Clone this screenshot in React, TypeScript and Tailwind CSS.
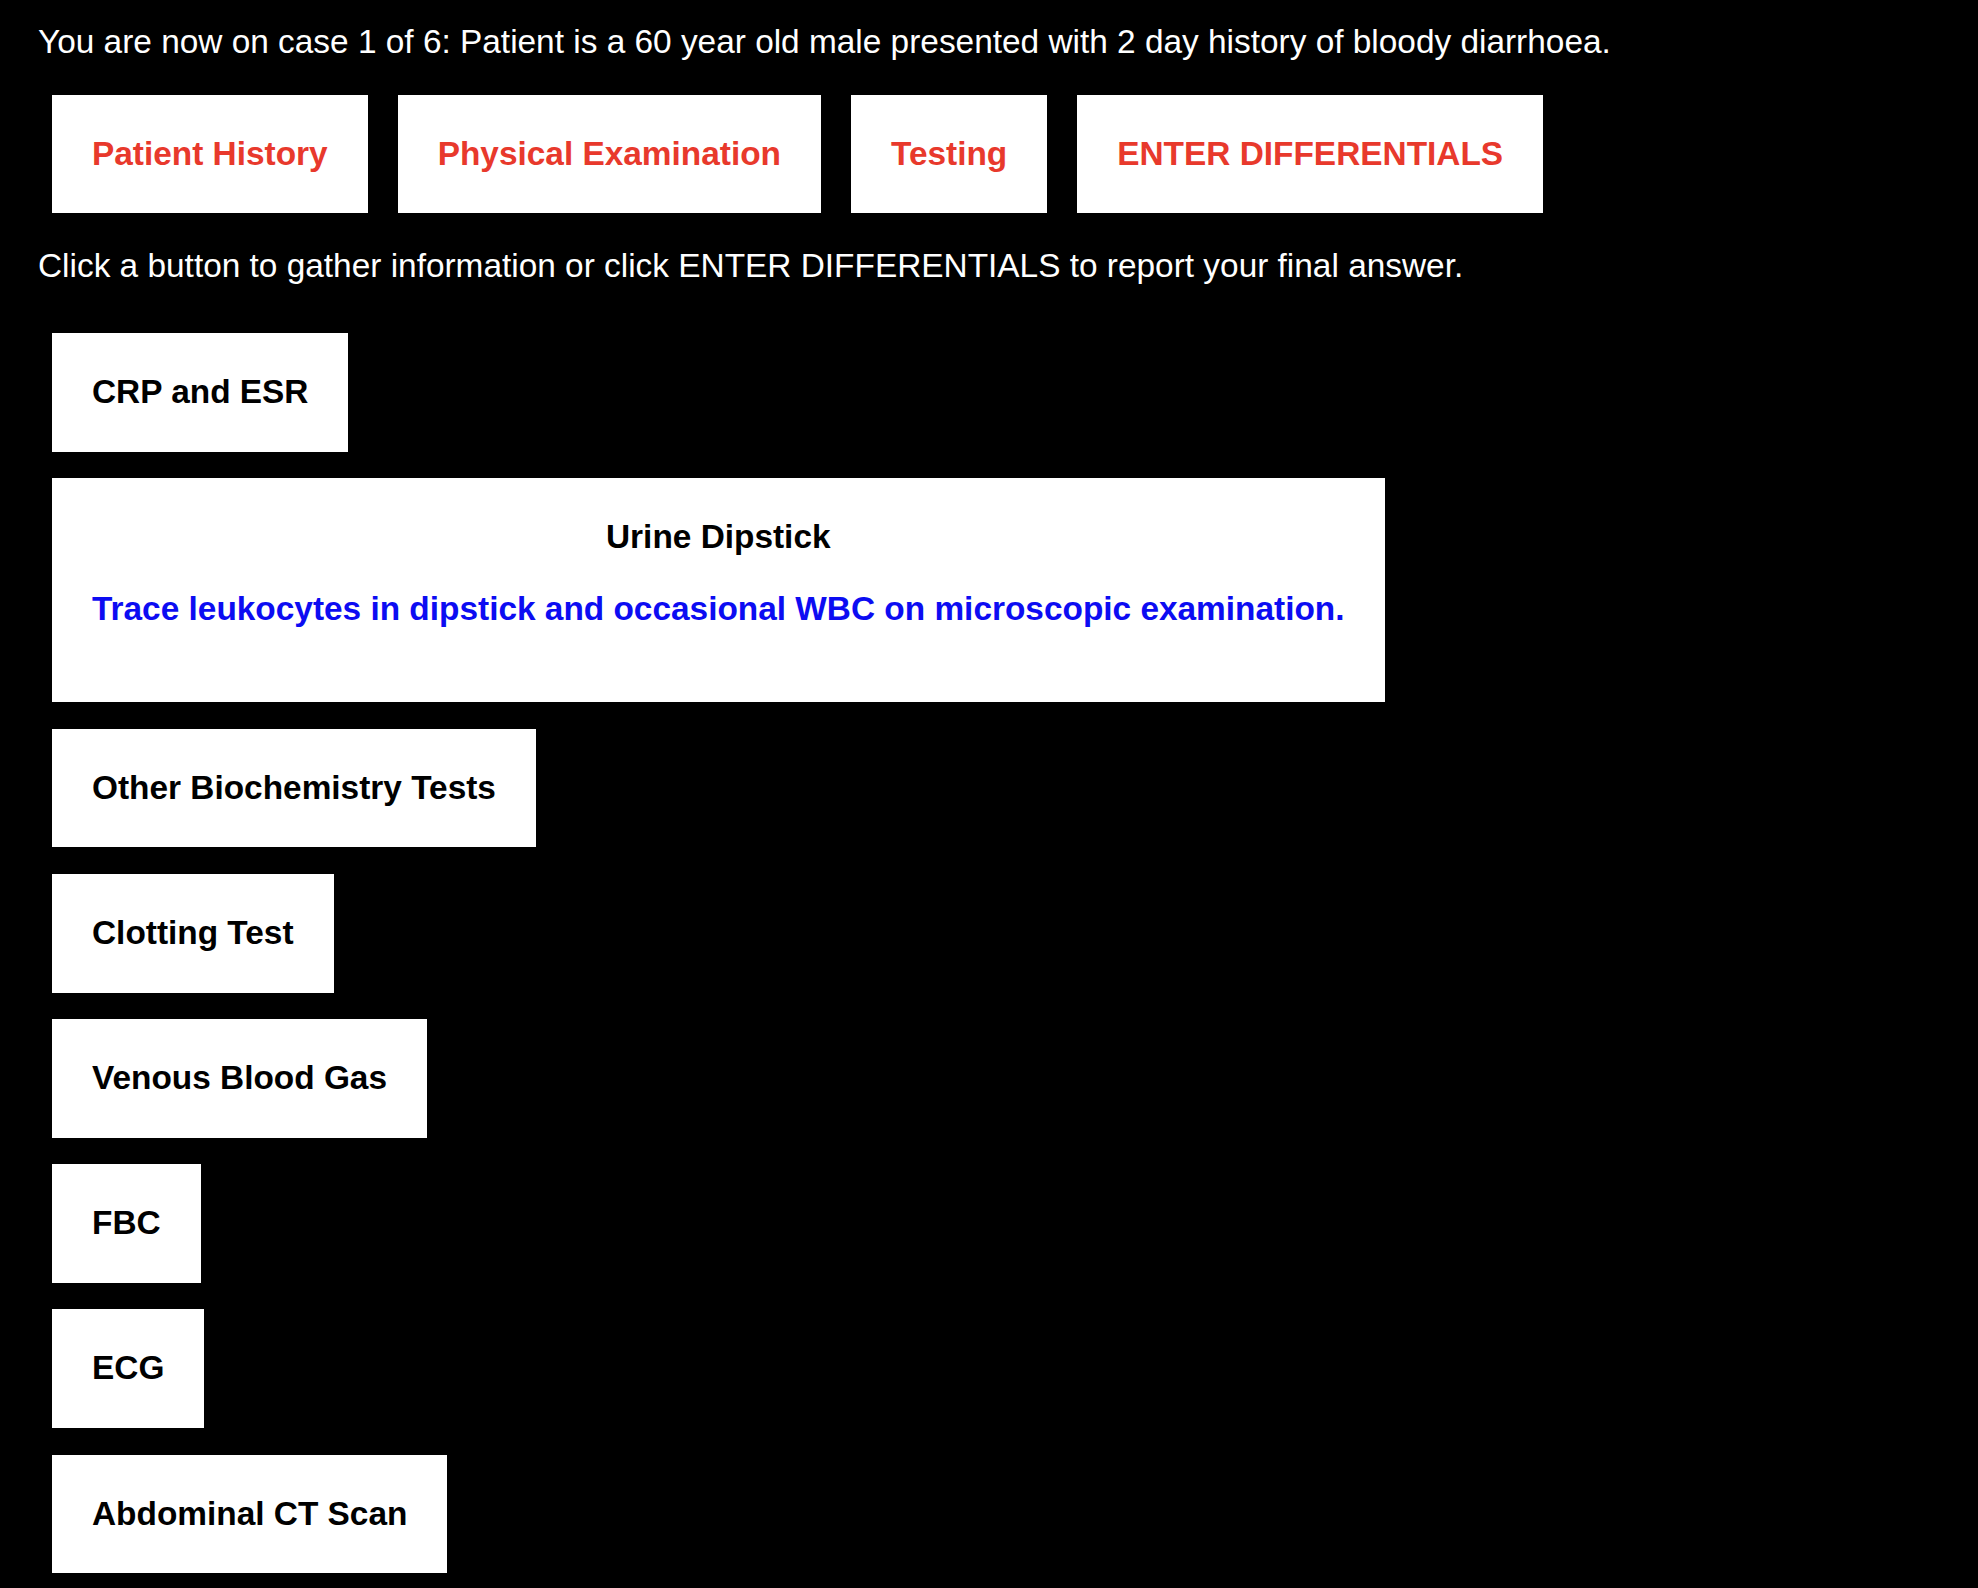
const navButtons = [
  "Patient History",
  "Physical Examination",
  "Testing",
  "ENTER DIFFERENTIALS",
];

const tests = [
  "Other Biochemistry Tests",
  "Clotting Test",
  "Venous Blood Gas",
  "FBC",
  "ECG",
  "Abdominal CT Scan",
];

const TestButton = ({ label }: { label: string }) => (
  <button className="bg-white px-[40px] py-[40px] text-left font-bold leading-[38.6px] text-black">
    {label}
  </button>
);

export default function App() {
  return (
    <div className="min-h-screen bg-black pl-[38px] pb-[20px] font-['Liberation_Sans',Arial,sans-serif] text-[33.4px] leading-[38.6px] text-white">
      <p className="pt-[22.5px]">
        You are now on case 1 of 6: Patient is a 60 year old male presented with
        2 day history of bloody diarrhoea.
      </p>

      <div className="mt-[33.6px] flex gap-[30px] pl-[14px]">
        {navButtons.map((b) => (
          <button
            key={b}
            className="bg-white px-[40px] py-[40px] font-bold leading-[38.6px] text-[#e8392c]"
          >
            {b}
          </button>
        ))}
      </div>

      <p className="mt-[33.6px]">
        Click a button to gather information or click ENTER DIFFERENTIALS to
        report your final answer.
      </p>

      <div className="mt-[47.5px] flex flex-col items-start gap-[26.6px] pl-[14px]">
        <TestButton label="CRP and ESR" />

        <div className="bg-white px-[40px] py-[40px] text-black">
          <div className="text-center font-bold">Urine Dipstick</div>
          <p className="my-[33.4px] font-bold text-[#0c0cf2]">
            Trace leukocytes in dipstick and occasional WBC on microscopic
            examination.
          </p>
        </div>

        {tests.map((t) => (
          <TestButton key={t} label={t} />
        ))}
      </div>
    </div>
  );
}
